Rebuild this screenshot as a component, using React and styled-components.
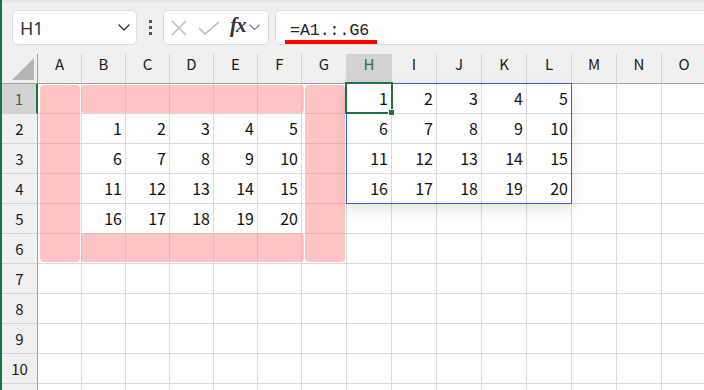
import React from "react";
import styled, { createGlobalStyle } from "styled-components";

const GREEN = "#1e7145";
const COLUMNS = ["A", "B", "C", "D", "E", "F", "G", "H", "I", "J", "K", "L", "M", "N", "O"];
const COL_WIDTHS = [44, 44, 44, 44, 44, 44, 45, 45, 45, 45, 45, 45, 45, 45, 45];
const VISIBLE_ROWS = 10;
const ACTIVE_COL = 7;
const ACTIVE_ROW = 1;

// B2:F5 is the source, H1:L4 is the spilled result
const cellValue = (row, col) => {
	if (row >= 2 && row <= 5 && col >= 1 && col <= 5) return (row - 2) * 5 + col;
	if (row >= 1 && row <= 4 && col >= 7 && col <= 11) return (row - 1) * 5 + (col - 6);
	return "";
};

// pink marks drawn around the ring of A1:G6 (sheet coordinates)
const HIGHLIGHTS = [
	{ left: 38, top: 31, width: 40, height: 177 },
	{ left: 79, top: 31, width: 223, height: 28 },
	{ left: 79, top: 179, width: 223, height: 29 },
	{ left: 303, top: 31, width: 40, height: 177 }
];

const GlobalStyle = createGlobalStyle`
	html, body {
		margin: 0;
		padding: 0;
		overflow: hidden;
		background: #fff;
	}
	body {
		font-family: "Noto Sans CJK JP", "Noto Sans", sans-serif;
	}
`;

const Window = styled.div`
	width: 704px;
	height: 390px;
	box-sizing: border-box;
	border-left: 2px solid ${GREEN};
	overflow: hidden;
	background: #fff;
`;

const Toolbar = styled.div`
	height: 54px;
	box-sizing: border-box;
	display: flex;
	align-items: flex-start;
	padding: 10px 0 0 10px;
	background: linear-gradient(#e4e4e4 0, #f0f0f0 4px);
`;

const Box = styled.div`
	height: 35px;
	box-sizing: border-box;
	background: #fff;
	border: 1px solid #dcdcdc;
	border-radius: 5px;
	display: flex;
	align-items: center;
`;

const NameBox = styled(Box)`
	width: 125px;
	justify-content: space-between;
	padding: 0 6px 0 7px;
	font-family: "Noto Sans", sans-serif;
	font-size: 18px;
	color: #333;
`;

const Kebab = styled.div`
	width: 26px;
	height: 35px;
	display: flex;
	flex-direction: column;
	align-items: center;
	justify-content: center;
	gap: 3px;

	span {
		width: 3px;
		height: 3px;
		background: #555;
	}
`;

const FxGroup = styled(Box)`
	width: 106px;
	padding: 0 2px 0 7px;
`;

const FxLabel = styled.span`
	font-family: "Liberation Serif", serif;
	font-style: italic;
	font-weight: bold;
	font-size: 21px;
	color: #333;
	margin: 0 3px 4px 10px;
	letter-spacing: -1px;
`;

const FormulaBar = styled(Box)`
	flex: 1;
	margin-left: 6px;
	margin-right: -10px;
	padding-left: 14px;
	border-top-right-radius: 0;
	border-bottom-right-radius: 0;
`;

const FormulaText = styled.span`
	position: relative;
	font-family: "Liberation Mono", monospace;
	font-size: 16.5px;
	color: #222;
	margin-top: 5px;

	&::after {
		content: "";
		position: absolute;
		left: -5px;
		right: -8px;
		bottom: -4px;
		height: 4px;
		background: #ff0000;
	}
`;

const Sheet = styled.div`
	position: relative;
	display: grid;
	grid-template-columns: 36px ${COL_WIDTHS.map(w => `${w}px`).join(" ")};
	grid-auto-rows: 30px;
`;

const Corner = styled.div`
	box-sizing: border-box;
	background: #f0f0f0;
	border-right: 1px solid #a0a0a0;
	border-bottom: 1px solid #a0a0a0;
	position: relative;

	&::after {
		content: "";
		position: absolute;
		right: 3px;
		bottom: 3px;
		width: 22px;
		height: 22px;
		background: #b5b5b5;
		clip-path: polygon(100% 0, 100% 100%, 0 100%);
	}
`;

const ColHeader = styled.div`
	box-sizing: border-box;
	background: ${p => (p.$selected ? "#d3d3d3" : "#f0f0f0")};
	color: ${p => (p.$selected ? GREEN : "#1a1a1a")};
	border-right: 1px solid #d4d4d4;
	border-bottom: ${p => (p.$selected ? `2px solid ${GREEN}` : "1px solid #a0a0a0")};
	font-size: 15px;
	line-height: 20px;
	text-align: center;
`;

const RowHeader = styled.div`
	box-sizing: border-box;
	background: ${p => (p.$selected ? "#d3d3d3" : "#f0f0f0")};
	color: ${p => (p.$selected ? GREEN : "#1a1a1a")};
	border-right: ${p => (p.$selected ? `2px solid ${GREEN}` : "1px solid #a0a0a0")};
	border-bottom: 1px solid #d4d4d4;
	font-size: 15px;
	line-height: 29px;
	text-align: center;
`;

const Cell = styled.div`
	box-sizing: border-box;
	border-right: 1px solid #dadada;
	border-bottom: 1px solid #dadada;
	font-size: 16px;
	line-height: 29px;
	text-align: right;
	padding-right: 3px;
	color: #111;
`;

const Highlight = styled.div`
	position: absolute;
	left: ${p => p.$left}px;
	top: ${p => p.$top}px;
	width: ${p => p.$width}px;
	height: ${p => p.$height}px;
	background: rgba(255, 140, 140, 0.5);
	border-radius: 4px;
	pointer-events: none;
`;

const SpillRange = styled.div`
	position: absolute;
	left: 344px;
	top: 29px;
	width: 226px;
	height: 121px;
	box-sizing: border-box;
	border: 1px solid #3a64c4;
	box-shadow: 0 5px 12px rgba(0, 0, 0, 0.12);
	pointer-events: none;
`;

const ActiveCell = styled.div`
	position: absolute;
	left: 343px;
	top: 28px;
	width: 48px;
	height: 32px;
	box-sizing: border-box;
	border: 2px solid ${GREEN};
	pointer-events: none;

	&::after {
		content: "";
		position: absolute;
		right: -4px;
		bottom: -4px;
		width: 5px;
		height: 5px;
		background: ${GREEN};
		border: 1px solid #fff;
	}
`;

const Chevron = ({ color = "#333", size = 12 }) => (
	<svg width={size} height={size * 0.6} viewBox="0 0 12 7" fill="none">
		<path d="M1 1l5 5 5-5" stroke={color} strokeWidth="1.4" strokeLinecap="round" strokeLinejoin="round" />
	</svg>
);

const CancelIcon = () => (
	<svg width="16" height="16" viewBox="0 0 16 16" fill="none">
		<path d="M1 1l14 14M15 1L1 15" stroke="#b8b8b8" strokeWidth="1.4" />
	</svg>
);

const CheckIcon = () => (
	<svg width="22" height="14" viewBox="0 0 22 14" fill="none" style={{ marginLeft: 11 }}>
		<path d="M1 7l6 6L21 1" stroke="#b8b8b8" strokeWidth="1.4" />
	</svg>
);

const rows = Array.from({ length: VISIBLE_ROWS + 1 }, (_, r) => r + 1);

const App = () => (
	<>
		<GlobalStyle />
		<Window>
			<Toolbar>
				<NameBox>
					<span>H1</span>
					<Chevron />
				</NameBox>
				<Kebab>
					<span />
					<span />
					<span />
				</Kebab>
				<FxGroup>
					<CancelIcon />
					<CheckIcon />
					<FxLabel>fx</FxLabel>
					<Chevron color="#888" size={11} />
				</FxGroup>
				<FormulaBar>
					<FormulaText>=A1.:.G6</FormulaText>
				</FormulaBar>
			</Toolbar>
			<Sheet>
				<Corner />
				{COLUMNS.map((c, i) => (
					<ColHeader key={c} $selected={i === ACTIVE_COL}>
						{c}
					</ColHeader>
				))}
				{rows.map(row => (
					<React.Fragment key={row}>
						{/* the last row only peeks in below the edge, its label is out of view */}
						<RowHeader $selected={row === ACTIVE_ROW}>{row <= VISIBLE_ROWS ? row : ""}</RowHeader>
						{COLUMNS.map((c, col) => (
							<Cell key={c}>{cellValue(row, col)}</Cell>
						))}
					</React.Fragment>
				))}
				{HIGHLIGHTS.map((h, i) => (
					<Highlight key={i} $left={h.left} $top={h.top} $width={h.width} $height={h.height} />
				))}
				<SpillRange />
				<ActiveCell />
			</Sheet>
		</Window>
	</>
);

export default App;
